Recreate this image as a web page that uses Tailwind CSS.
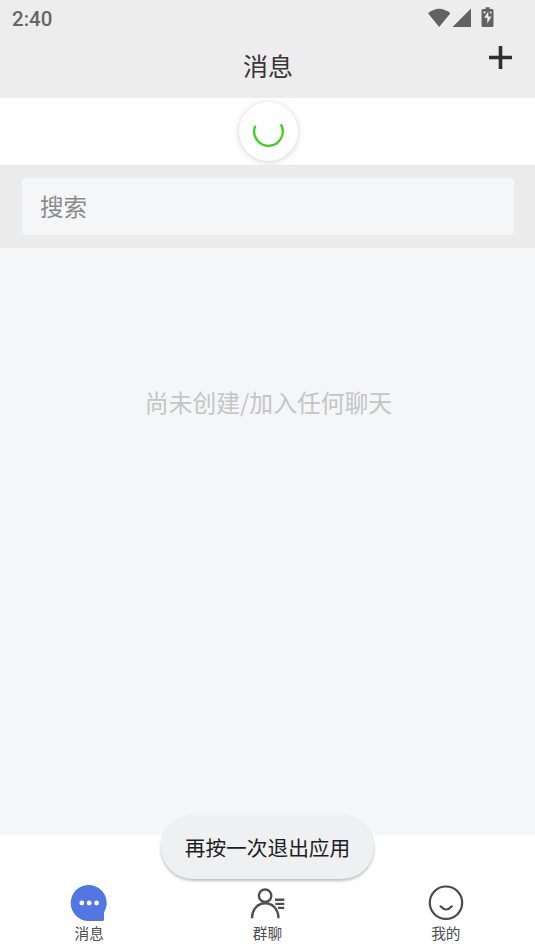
<!DOCTYPE html>
<html lang="zh-CN">
<head>
<meta charset="utf-8">
<meta name="viewport" content="width=device-width, initial-scale=1">
<title>消息</title>
<script src="https://cdn.jsdelivr.net/npm/@tailwindcss/browser@4"></script>
</head>
<body class="font-['Noto_Sans_CJK_SC',sans-serif] bg-white">
<div class="relative flex flex-col w-[535px] h-[951px] overflow-hidden">
  <header class="h-[98px] shrink-0 bg-[#ededed]">
    <div class="flex justify-between h-[36px] pl-[12px] pr-[41px]">
      <span class="font-['Roboto',sans-serif] font-medium text-[20.5px] leading-[38px] text-[#676767]">2:40</span>
      <svg class="h-[36px] w-[66px]" viewBox="428 0 66 36" fill="#626262">
        <path d="M428 13.2Q439.2 4.2 450.4 13.2L439.2 27Z"/>
        <path d="M471 8.5V27H452.500Z"/>
        <path d="M485.500 9V7.300h4.200V9h2.300q1.500 0 1.500 1.500v15q0 1.500-1.500 1.500h-9q-1.500 0-1.500-1.500v-15q0-1.500 1.500-1.500z"/>
        <path d="M488.300 11.500l-4.200 6.300h3.200V23.500l4.200-7h-3.200z" fill="#ededed"/>
        <path d="M483.500 11.500h2v1.700h-2zM490 11.500h1.500v2H490z" fill="#ededed"/>
      </svg>
    </div>
    <div class="grid grid-cols-[1fr_auto_1fr] h-[62px] pr-[23px] pl-[24px]">
      <span></span>
      <h1 class="text-[25px] leading-[58px] text-[#363636]">消息</h1>
      <svg class="justify-self-end mt-[10px] w-[23px] h-[23px]" viewBox="0 0 23 23"><path d="M11.500 0v23M0 11.500h23" stroke="#2f2f2f" stroke-width="3.600"/></svg>
    </div>
  </header>
  <div class="h-[67px] shrink-0 flex justify-center pt-[4px] pl-px bg-white">
    <div class="size-[59px] rounded-full bg-white shadow-[0_1px_6px_rgba(0,0,0,0.18)]">
      <svg class="size-[59px]" viewBox="0 0 59 59" fill="none"><path d="M16.300 23.800A14.300 14.300 0 1 0 41.800 22.300" stroke="#3dce20" stroke-width="2.300"/></svg>
    </div>
  </div>
  <div class="h-[83px] shrink-0 bg-[#ececec] border-y border-[#e8e8e8] pt-[12px] pl-[22px] pr-[21px]">
    <div class="h-[57px] rounded-[4px] bg-[#f5f6f8] pl-[18px] text-[23.600px] leading-[56px] text-[#8a8a8a]">搜索</div>
  </div>
  <main class="h-[587px] shrink-0 bg-[#f5f6f8] pt-[134px] text-center text-[23.800px] leading-[40px] text-[#c4c5c7] pl-[2px]">尚未创建/加入任何聊天</main>
  <nav class="grid grid-cols-3 h-[116px] shrink-0 bg-white pt-[48px] text-[14.700px] leading-[20px] text-[#4c4c4c]">
    <div class="flex flex-col items-center">
      <svg class="w-[40px] h-[40px]" viewBox="69 883 40 40"><path d="M104 912.500A18 18 0 1 0 89 921H102.500Q104 921 104 919.500Z" fill="#5276e2"/><g fill="#fff"><circle cx="81.800" cy="903" r="2.400"/><circle cx="89.200" cy="903" r="2.400"/><circle cx="96.600" cy="903" r="2.400"/></g></svg>
      <span>消息</span>
    </div>
    <div class="flex flex-col items-center">
      <svg class="w-[40px] h-[40px]" viewBox="247 883 40 40" fill="none" stroke="#505050" stroke-width="2.400"><circle cx="265.100" cy="895.700" r="6.200"/><path d="M252 918.300C252 909.500 257.500 903.200 265.200 903.200S278.500 909.500 278.500 918.300M275 899.700h9.300M275.300 903.900h9M278 907.900h6.300"/></svg>
      <span>群聊</span>
    </div>
    <div class="flex flex-col items-center">
      <svg class="w-[40px] h-[40px]" viewBox="426 883 40 40" fill="none" stroke="#494949" stroke-width="2.200"><circle cx="446" cy="902.700" r="16.200"/><path d="M440.600 906.300q5.500 6.400 11.200 0" stroke-linecap="round"/></svg>
      <span>我的</span>
    </div>
  </nav>
  <div class="absolute left-[161px] top-[815px] w-[213px] h-[64px] rounded-full bg-[#eff0f2] shadow-[0_2px_3px_rgba(0,0,0,0.25)] text-center text-[20.700px] leading-[64px] text-[#1c1e22]">再按一次退出应用</div>
</div>
</body>
</html>
